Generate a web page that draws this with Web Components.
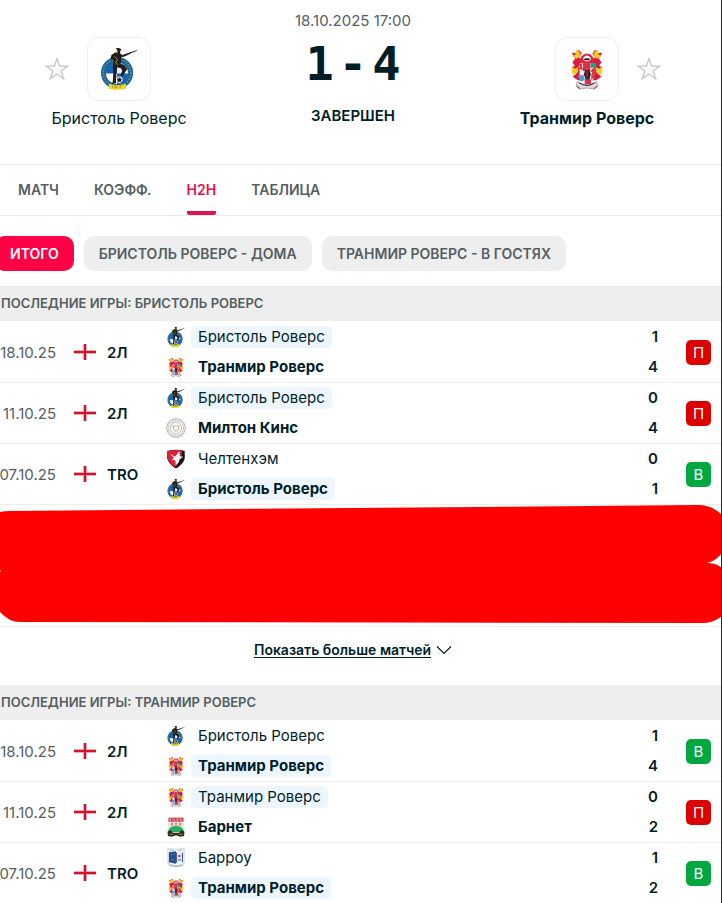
<!DOCTYPE html>
<html lang="ru">
<head>
<meta charset="utf-8">
<meta name="viewport" content="width=device-width, initial-scale=1">
<title>Бристоль Роверс - Транмир Роверс</title>
<style>
body {
    margin: 0;
    background: #fff;
    color: #001e28;
    font-family: Inter, Roboto, sans-serif;
    font-size: 16px;
}
</style>
</head>
<body>
<match-page>
    <match-header date="18.10.2025 17:00" home="1" away="4" status="ЗАВЕРШЕН">
        <match-team slot="home" crest="bristol">Бристоль Роверс</match-team>
        <match-team slot="away" crest="tranmere" side="right" winner>Транмир Роверс</match-team>
    </match-header>
    <match-tabs>
        <a href="#match">МАТЧ</a>
        <a href="#odds">КОЭФФ.</a>
        <a href="#h2h" aria-current="page">H2H</a>
        <a href="#table">ТАБЛИЦА</a>
    </match-tabs>
    <filter-chips>
        <button type="button" aria-pressed="true">ИТОГО</button>
        <button type="button">БРИСТОЛЬ РОВЕРС - ДОМА</button>
        <button type="button">ТРАНМИР РОВЕРС - В ГОСТЯХ</button>
    </filter-chips>
    <h2h-section>
        <span slot="title">ПОСЛЕДНИЕ ИГРЫ: БРИСТОЛЬ РОВЕРС</span>
        <h2h-row date="18.10.25" league="2Л" home="Бристоль Роверс" home-crest="bristol" away="Транмир Роверс" away-crest="tranmere" score="1:4" current="home" result="П"></h2h-row>
        <h2h-row date="11.10.25" league="2Л" home="Бристоль Роверс" home-crest="bristol" away="Милтон Кинс" away-crest="milton" score="0:4" current="home" result="П"></h2h-row>
        <h2h-row date="07.10.25" league="TRO" home="Челтенхэм" home-crest="cheltenham" away="Бристоль Роверс" away-crest="bristol" score="0:1" current="away" result="В"></h2h-row>
        <redacted-rows></redacted-rows>
        <show-more>Показать больше матчей</show-more>
    </h2h-section>
    <h2h-section>
        <span slot="title">ПОСЛЕДНИЕ ИГРЫ: ТРАНМИР РОВЕРС</span>
        <h2h-row date="18.10.25" league="2Л" home="Бристоль Роверс" home-crest="bristol" away="Транмир Роверс" away-crest="tranmere" score="1:4" current="away" result="В"></h2h-row>
        <h2h-row date="11.10.25" league="2Л" home="Транмир Роверс" home-crest="tranmere" away="Барнет" away-crest="barnet" score="0:2" current="home" result="П"></h2h-row>
        <h2h-row date="07.10.25" league="TRO" home="Барроу" home-crest="barrow" away="Транмир Роверс" away-crest="tranmere" score="1:2" current="away" result="В"></h2h-row>
    </h2h-section>
</match-page>

<script>
const CRESTS = {
    bristol: `
        <svg viewBox="10 6 116 128">
            <circle cx="62" cy="82" r="49" fill="#1f62a0"/>
            <circle cx="62" cy="82" r="42" fill="none" stroke="#73a843" stroke-width="5" stroke-dasharray="4 5"/>
            <circle cx="62" cy="82" r="34" fill="#1765b2"/>
            <path d="M28 84h34v32a34 34 0 0 1-34-32z" fill="#fff"/>
            <path d="M62 50a34 34 0 0 1 34 34H62z" fill="#e8f2f8"/>
            <path d="M55 10l9-5 9 3 2 4-3 3-1 7 8 6 16-5 10-5-1 5-19 9-11 2 1 11-2 9 11 4 9 12-7 11-6 10-8-2 6-14-4-7-12-3-2 18-1 30-13 3 3-8 2-29-2-17 3-18-10-5 3-12 11-7 8-1-2-6-1-4z" fill="#211d1a"/>
            <path d="M69 32l53-18" stroke="#27211d" stroke-width="3"/>
            <path d="M55 32l9 9-6 8 6 9M59 18l5 4" stroke="#b49a42" stroke-width="3" fill="none"/>
            <circle cx="69" cy="103" r="10" fill="#f7f9fa"/>
            <path d="M69 97l6 4-2 7h-8l-2-7zM61 95l4 3M75 95l3-2M73 108l4 3M65 108l-3 4" fill="#1d222b" stroke="#1d222b" stroke-width="2"/>
            <path d="M38 115q25 8 50 0l2 15q-27 7-54 0z" fill="#efd523"/>
            <path d="M48 120v8m5-7h5v7h-5m9-8v8m6-8l6 1-4 7" fill="none" stroke="#93811b" stroke-width="2"/>
        </svg>`,
    tranmere: `
        <svg viewBox="7 4 96 124">
            <path d="M10 18l13 1 8-10 8 11-8 13 12 6-3 16-18 4-10-12 8-12z" fill="#d9193d"/>
            <path d="M100 18l-13 1-8-10-8 11 8 13-12 6 3 16 18 4 10-12-8-12z" fill="#d9193d"/>
            <path d="M12 28l8-4 4-16 10 9 3 13-14 6zM98 28l-8-4-4-16-10 9-3 13 14 6z" fill="#f3c623"/>
            <path d="M34 45q1-23 21-25 20 2 21 25l-10 5H44z" fill="#d62442"/>
            <path d="M43 38q2-11 12-12 10 1 12 12l-6 5H49z" fill="#fff"/>
            <path d="M49 34h12l4 6H45z" fill="#35222d"/>
            <path d="M12 60l14-8 12 20 10 28-20-1-15-10 10-12zM98 60l-14-8-12 20-10 28 20-1 15-10-10-12z" fill="#d8193b"/>
            <path d="M10 57l9 8 11-5-2 15-9 10-9-9zM100 57l-9 8-11-5 2 15 9 10 9-9z" fill="#f0ca26"/>
            <path d="M33 49h44v35q0 20-22 27-22-7-22-27z" fill="#edecee"/>
            <path d="M43 46h22v26H43zM49 96h18v15H48zM33 50h7v16h-7zM70 66h7v16h-7z" fill="#dc3144"/>
            <path d="M66 48l16 1v13H66z" fill="#1ca28a"/>
            <path d="M49 70h14l3 12-4 15H51l-5-15z" fill="#272029"/>
            <path d="M28 86l16-3 5 16-13 4z" fill="#4b9ed6"/>
            <path d="M68 81l14-12-3 21-12 8z" fill="#d83a55"/>
            <path d="M32 63l13 4M67 74l11-11M55 72v20" stroke="#d42342" stroke-width="4"/>
            <path d="M26 103q29 19 58 0l3 14-14 8-18-3-18 3-14-8z" fill="#d9dce0" stroke="#9e8388" stroke-width="2"/>
            <path d="M32 107q23 15 46 0" fill="none" stroke="#392a33" stroke-width="3"/>
            <path d="M25 117l10 8m50-8l-10 8" stroke="#c65264" stroke-width="4"/>
        </svg>`,
    milton: `
        <svg viewBox="0 0 60 60">
            <circle cx="30" cy="30" r="28" fill="#fff" stroke="#8f8376" stroke-width="2"/>
            <circle cx="30" cy="30" r="23" fill="none" stroke="#b9b1a7" stroke-width="4" stroke-dasharray="3 2"/>
            <circle cx="30" cy="30" r="17" fill="#fff" stroke="#a99b88" stroke-width="2"/>
            <path d="M21 23l5 2 4-3 4 3 5-2-2 11-7 7-7-7z" fill="none" stroke="#c1a984" stroke-width="3"/>
        </svg>`,
    cheltenham: `
        <svg viewBox="0 0 60 64">
            <path d="M2 6Q30-2 58 6v25Q51 51 30 62 9 51 2 31z" fill="#171719"/>
            <path d="M3 8q20-6 42-4l5 6-6 24-17 24Q8 46 3 30z" fill="#dc2038"/>
            <path d="M11 16l16 9L41 6l1 17 11 2-12 8-3 10-9 9-1-15-12-4 8-4z" fill="#fff"/>
        </svg>`,
    barnet: `
        <svg viewBox="2 2 56 64">
            <path d="M5 4h50v34q-4 17-25 22Q9 54 5 38z" fill="#f1e4dc"/>
            <path d="M6 4h48v13H6z" fill="#c7485a"/>
            <path d="M12 7v7m8-7l6 7m8-7v7m8-7l6 7" stroke="#f7dcda" stroke-width="3"/>
            <path d="M14 20l6 10m0-10l-6 10m13-10l6 10m0-10l-6 10m13-10l6 10m0-10l-6 10" stroke="#a54f45" stroke-width="2"/>
            <path d="M5 45q7-14 25-14t25 14v6H5z" fill="#25ae62"/>
            <path d="M3 48l10-4 8 9h18l8-9 10 4-1 15-13 2-13-5-13 5-13-2z" fill="#322d1f"/>
            <path d="M10 56l11 2m18 0l11-2" stroke="#a09463" stroke-width="3"/>
        </svg>`,
    barrow: `
        <svg viewBox="2 2 56 62">
            <path d="M5 4q24 4 50 0v45l-25 13L5 49z" fill="#f5f8fa" stroke="#aabbc9" stroke-width="2"/>
            <path d="M8 15l22-3v39L8 46z" fill="#234f91"/>
            <path d="M30 12l20 3v31l-20 5z" fill="#e8ecf1"/>
            <path d="M11 9l12 1m14 0l12-1" stroke="#9cbbd1" stroke-width="3"/>
            <path d="M32 16v32m18-31v29" stroke="#304b76" stroke-width="3"/>
            <circle cx="41" cy="27" r="4" fill="#cf4653"/>
            <path d="M37 39h8" stroke="#304b76" stroke-width="3"/>
            <path d="M14 22l5 3m4-5l3 4M14 37l10 2" stroke="#819fca" stroke-width="2"/>
            <path d="M6 51q24 9 48 0v7q-24 8-48 0z" fill="#d3dae4"/>
            <path d="M11 55q19 6 38 0" fill="none" stroke="#8b9db8" stroke-width="2"/>
        </svg>`
}

class TeamCrest extends HTMLElement {
    constructor() {
        super()
        this.root = this.attachShadow({ mode: "open" })
    }

    connectedCallback() {
        this.root.innerHTML = `
            <style>
            :host {
                display: block;
                width: 20px;
                height: 20px;
            }
            svg {
                display: block;
                width: 100%;
                height: 100%;
            }
            </style>
            ${CRESTS[this.getAttribute("name")]}
        `
    }
}

class MatchPage extends HTMLElement {
    constructor() {
        super()
        this.root = this.attachShadow({ mode: "open" })
        this.root.innerHTML = `
            <style>
            :host {
                display: block;
                overflow: hidden;
                border-right: 1px solid #25282b;
            }
            </style>
            <main><slot></slot></main>
        `
    }
}

class MatchHeader extends HTMLElement {
    constructor() {
        super()
        this.root = this.attachShadow({ mode: "open" })
    }

    connectedCallback() {
        this.root.innerHTML = `
            <style>
            :host {
                display: block;
            }
            header {
                display: grid;
                grid-template-columns: repeat(3, 1fr);
                padding: 11px 17px 35px 2px;
            }
            ::slotted(match-team) {
                padding-top: 26px;
            }
            .info {
                display: flex;
                flex-direction: column;
                align-items: center;
            }
            time {
                color: #555e61;
                font-size: 15px;
                line-height: 20px;
            }
            .score {
                display: flex;
                gap: 5px;
                margin-top: 7px;
                font: bold 47px/52px "DejaVu Sans Mono", monospace;
                color: #001e28;
            }
            .status {
                margin-top: 16px;
                font-size: 15px;
                font-weight: 600;
                line-height: 20px;
            }
            </style>
            <header>
                <slot name="home"></slot>
                <div class="info">
                    <time>${this.getAttribute("date")}</time>
                    <div class="score"><span>${this.getAttribute("home")}</span><span>-</span><span>${this.getAttribute("away")}</span></div>
                    <div class="status">${this.getAttribute("status")}</div>
                </div>
                <slot name="away"></slot>
            </header>
        `
    }
}

class MatchTeam extends HTMLElement {
    constructor() {
        super()
        this.root = this.attachShadow({ mode: "open" })
    }

    connectedCallback() {
        this.root.innerHTML = `
            <style>
            :host {
                display: block;
            }
            .top {
                display: grid;
                grid-template-columns: 1fr auto 1fr;
                align-items: center;
                gap: 18px;
            }
            .box {
                grid-column: 2;
                grid-row: 1;
                box-sizing: border-box;
                width: 64px;
                height: 64px;
                padding: 10px;
                border: 1px solid #eee;
                border-radius: 12px;
            }
            team-crest {
                width: 42px;
                height: 42px;
            }
            button {
                grid-column: 1;
                grid-row: 1;
                justify-self: end;
                width: 24px;
                height: 24px;
                padding: 0;
                border: 0;
                background: none;
            }
            :host([side="right"]) button {
                grid-column: 3;
                justify-self: start;
            }
            button svg {
                display: block;
            }
            .name {
                margin-top: 6px;
                text-align: center;
                line-height: 22px;
            }
            :host([winner]) .name {
                font-weight: 700;
            }
            </style>
            <div class="top">
                <button type="button" aria-label="В избранное">
                    <svg width="24" height="24" viewBox="0 0 24 24" fill="none" stroke="#c4c8ca" stroke-width="1.4">
                        <path d="M12 1.5l2.6 7.6h8l-6.4 4.8 2.4 7.8-6.6-4.7-6.6 4.7 2.4-7.8-6.4-4.8h8z"/>
                    </svg>
                </button>
                <div class="box"><team-crest name="${this.getAttribute("crest")}"></team-crest></div>
            </div>
            <div class="name"><slot></slot></div>
        `
    }
}

class MatchTabs extends HTMLElement {
    constructor() {
        super()
        this.root = this.attachShadow({ mode: "open" })
        this.root.innerHTML = `
            <style>
            :host {
                display: block;
            }
            nav {
                display: flex;
                gap: 35px;
                padding: 0 18px;
                border-top: 1px solid #e9eaeb;
                border-bottom: 1px solid #e9eaeb;
            }
            ::slotted(a) {
                box-sizing: border-box;
                height: 50px;
                border-bottom: 4px solid transparent;
                color: #555e61;
                font-size: 14px;
                font-weight: 600;
                line-height: 50px;
                text-decoration: none;
            }
            ::slotted(a[aria-current]) {
                color: #e0124f;
                background: linear-gradient(#e0124f, #e0124f) bottom / 100% 4px no-repeat border-box;
                border-radius: 2px;
            }
            </style>
            <nav><slot></slot></nav>
        `
    }
}

class FilterChips extends HTMLElement {
    constructor() {
        super()
        this.root = this.attachShadow({ mode: "open" })
        this.root.innerHTML = `
            <style>
            :host {
                display: flex;
                gap: 10px;
                margin-left: -5px;
                padding: 20px 0 15px;
            }
            ::slotted(button) {
                height: 35px;
                padding: 0 15px;
                border: 0;
                border-radius: 10px;
                background: #eee;
                color: #555e61;
                font: 600 14px/35px Inter, Roboto, sans-serif;
                white-space: nowrap;
            }
            ::slotted(button[aria-pressed="true"]) {
                background: #ff0046;
                color: #fff;
            }
            </style>
            <slot></slot>
        `
    }
}

class H2hSection extends HTMLElement {
    constructor() {
        super()
        this.root = this.attachShadow({ mode: "open" })
        this.root.innerHTML = `
            <style>
            :host {
                display: block;
            }
            h2 {
                margin: 0 0 1px;
                padding-left: 1px;
                background: #eee;
                color: #555e61;
                font-size: 13px;
                font-weight: 600;
                line-height: 35px;
            }
            </style>
            <section>
                <h2><slot name="title"></slot></h2>
                <slot></slot>
            </section>
        `
    }
}

class H2hRow extends HTMLElement {
    constructor() {
        super()
        this.root = this.attachShadow({ mode: "open" })
    }

    team(side, goals, otherGoals) {
        const classes = ["name"]
        if (this.getAttribute("current") === side) classes.push("current")
        if (goals > otherGoals) classes.push("winner")
        return `
            <team-crest name="${this.getAttribute(side + "-crest")}"></team-crest>
            <span class="${classes.join(" ")}">${this.getAttribute(side)}</span>
            <span class="goals">${goals}</span>
        `
    }

    connectedCallback() {
        const [home, away] = this.getAttribute("score").split(":").map(Number)
        const result = this.getAttribute("result")
        this.root.innerHTML = `
            <style>
            :host {
                display: block;
                border-bottom: 1px solid #eee;
            }
            a {
                display: flex;
                align-items: center;
                height: 60px;
                padding-right: 10px;
                color: inherit;
                font-size: 15px;
                text-decoration: none;
            }
            time {
                display: flex;
                flex: none;
                justify-content: flex-end;
                width: 56px;
                color: #555e61;
            }
            .flag {
                flex: none;
                margin: 0 11px 0 18px;
            }
            .league {
                flex: none;
                width: 59px;
                font-weight: 600;
            }
            .teams {
                flex: 1;
                display: grid;
                grid-template-columns: 20px auto 1fr;
                align-items: center;
                gap: 8px 5px;
                line-height: 22px;
            }
            .name {
                padding: 0 7px;
                border-radius: 5px;
                justify-self: start;
            }
            .current {
                background: #edf6ff;
            }
            .winner {
                font-weight: 700;
            }
            .goals {
                justify-self: end;
                font-weight: 600;
            }
            .result {
                width: 25px;
                height: 25px;
                margin-left: 28px;
                border-radius: 5px;
                background: ${result === "В" ? "#00a83f" : "#dc0000"};
                color: #fff;
                line-height: 25px;
                text-align: center;
            }
            </style>
            <a href="#game">
                <time>${this.getAttribute("date")}</time>
                <svg class="flag" width="22" height="16" viewBox="0 0 22 16">
                    <path d="M0 8h22M11 0v16" stroke="#f0a8b4" stroke-width="4"/>
                    <path d="M0 8h22M11 0v16" stroke="#d0142c" stroke-width="2"/>
                </svg>
                <span class="league">${this.getAttribute("league")}</span>
                <div class="teams">
                    ${this.team("home", home, away)}
                    ${this.team("away", away, home)}
                </div>
                <span class="result">${result}</span>
            </a>
        `
    }
}

class RedactedRows extends HTMLElement {
    constructor() {
        super()
        this.root = this.attachShadow({ mode: "open" })
        this.root.innerHTML = `
            <style>
            :host {
                display: block;
                margin-right: -1px;
                border-bottom: 1px solid #eee;
            }
            svg {
                display: block;
                width: 100%;
                height: 121px;
            }
            </style>
            <svg viewBox="0 0 722 121" preserveAspectRatio="none" aria-hidden="true">
                <path d="M0 7q4-1 10-1L698 0q14 0 24 10v38q-6 8-15 10 9 0 15 5v48q-8 7-18 7L20 117q-11 0-20-10V67l1-1-1-1z" fill="#f00"/>
            </svg>
        `
    }
}

class ShowMore extends HTMLElement {
    constructor() {
        super()
        this.root = this.attachShadow({ mode: "open" })
        this.root.innerHTML = `
            <style>
            :host {
                display: flex;
                justify-content: center;
                padding: 11px 15px 23px 0;
            }
            button {
                display: flex;
                align-items: center;
                gap: 5px;
                padding: 0;
                border: 0;
                background: none;
                color: inherit;
                font: 600 14px/24px Inter, Roboto, sans-serif;
            }
            span {
                text-decoration: underline;
                text-underline-offset: 2px;
            }
            </style>
            <button type="button">
                <span><slot></slot></span>
                <svg width="16" height="10" viewBox="0 0 16 10" fill="none" stroke="#001e28" stroke-width="1.2">
                    <path d="M1 1.5l7 7 7-7"/>
                </svg>
            </button>
        `
    }
}

window.customElements.define("team-crest", TeamCrest)
window.customElements.define("match-page", MatchPage)
window.customElements.define("match-header", MatchHeader)
window.customElements.define("match-team", MatchTeam)
window.customElements.define("match-tabs", MatchTabs)
window.customElements.define("filter-chips", FilterChips)
window.customElements.define("h2h-section", H2hSection)
window.customElements.define("h2h-row", H2hRow)
window.customElements.define("redacted-rows", RedactedRows)
window.customElements.define("show-more", ShowMore)
</script>
</body>
</html>
